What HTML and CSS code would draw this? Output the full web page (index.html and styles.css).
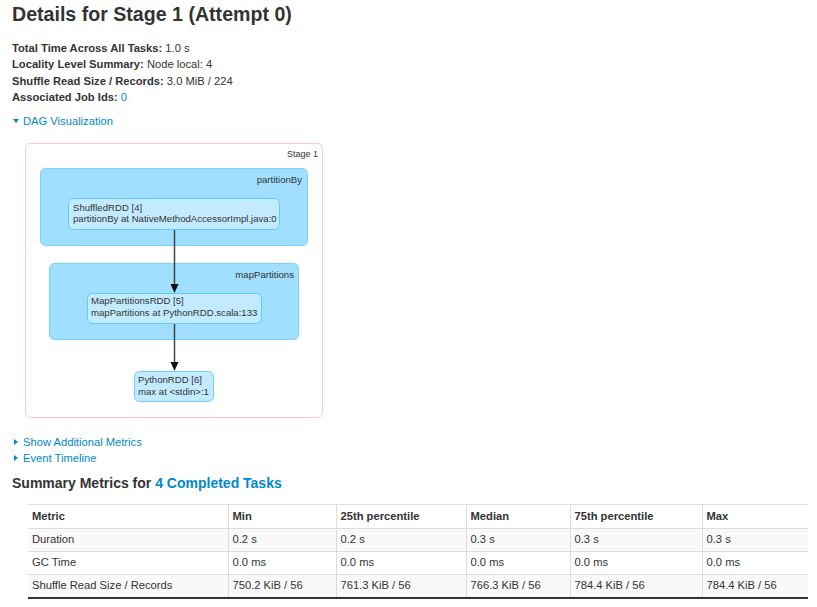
FILE: index.html
```html
<!DOCTYPE html>
<html lang="en">
<head>
  <meta charset="UTF-8" />
  <title>Details for Stage 1 (Attempt 0)</title>
  <link rel="stylesheet" href="styles.css">
</head>
<body>
  <div class="container">
    <h3 class="title">Details for Stage 1 (Attempt 0)</h3>

    <ul class="summary">
      <li><strong>Total Time Across All Tasks:</strong> 1.0 s</li>
      <li><strong>Locality Level Summary:</strong> Node local: 4</li>
      <li><strong>Shuffle Read Size / Records:</strong> 3.0 MiB / 224</li>
      <li><strong>Associated Job Ids:</strong> <a href="#">0</a></li>
    </ul>

    <a href="#" class="toggle"><span class="arrow-open"></span>DAG Visualization</a>

    <svg class="dag" width="300" height="278" viewBox="0 0 300 278">
      <rect class="stage" x="1.5" y="1.5" width="297" height="274" rx="5" />
      <text class="label stage-label" x="294" y="15" text-anchor="end">Stage 1</text>

      <rect class="cluster" x="16.5" y="26.5" width="267" height="77" rx="5" />
      <text class="label" x="278" y="41" text-anchor="end">partitionBy</text>
      <rect class="node" x="44.5" y="56.5" width="211" height="31" rx="5" />
      <text class="label" x="49" y="69">ShuffledRDD [4]</text>
      <text class="label" x="49" y="80">partitionBy at NativeMethodAccessorImpl.java:0</text>

      <rect class="cluster" x="25.5" y="121.5" width="249" height="76" rx="5" />
      <text class="label" x="270" y="136" text-anchor="end">mapPartitions</text>
      <rect class="node" x="63.5" y="151.5" width="174" height="30" rx="5" />
      <text class="label" x="67" y="162">MapPartitionsRDD [5]</text>
      <text class="label" x="67" y="174">mapPartitions at PythonRDD.scala:133</text>

      <rect class="node" x="110.5" y="229.5" width="79" height="30" rx="5" />
      <text class="label" x="114" y="241">PythonRDD [6]</text>
      <text class="label" x="114" y="253">max at &lt;stdin&gt;:1</text>

      <line class="edge" x1="150.5" y1="88" x2="150.5" y2="143" />
      <polygon class="head" points="146.5,142 154.5,142 150.5,151" />
      <line class="edge" x1="150.5" y1="182" x2="150.5" y2="221" />
      <polygon class="head" points="146.5,220 154.5,220 150.5,229" />
    </svg>

    <div class="toggles">
      <a href="#" class="toggle"><span class="arrow-closed"></span>Show Additional Metrics</a>
      <a href="#" class="toggle"><span class="arrow-closed"></span>Event Timeline</a>
    </div>

    <h4 class="section">Summary Metrics for <a href="#">4 Completed Tasks</a></h4>

    <table class="metrics">
      <thead>
        <tr>
          <th class="c-metric">Metric</th>
          <th class="c-min">Min</th>
          <th class="c-p25">25th percentile</th>
          <th class="c-med">Median</th>
          <th class="c-p75">75th percentile</th>
          <th class="c-max">Max</th>
        </tr>
      </thead>
      <tbody>
        <tr>
          <td>Duration</td>
          <td>0.2 s</td>
          <td>0.2 s</td>
          <td>0.3 s</td>
          <td>0.3 s</td>
          <td>0.3 s</td>
        </tr>
        <tr>
          <td>GC Time</td>
          <td>0.0 ms</td>
          <td>0.0 ms</td>
          <td>0.0 ms</td>
          <td>0.0 ms</td>
          <td>0.0 ms</td>
        </tr>
        <tr>
          <td>Shuffle Read Size / Records</td>
          <td>750.2 KiB / 56</td>
          <td>761.3 KiB / 56</td>
          <td>766.3 KiB / 56</td>
          <td>784.4 KiB / 56</td>
          <td>784.4 KiB / 56</td>
        </tr>
      </tbody>
    </table>
  </div>
</body>
</html>
```

FILE: styles.css
```css
:root {
  --link: #0088cc;
  --text: #333333;
  --border: #dddddd;
}

* {
  box-sizing: border-box;
  margin: 0;
  padding: 0;
}

body {
  font-family: 'Liberation Sans', Arial, sans-serif;
  font-size: 11.2px;
  line-height: 16px;
  color: var(--text);
  background: #ffffff;
}

a {
  color: var(--link);
  text-decoration: none;
}

.container {
  padding: 2px 9px 0 12px;
}

.title {
  font-size: 19.6px;
  font-weight: bold;
  line-height: 24px;
  margin-bottom: 14px;
}

.summary {
  list-style: none;
  line-height: 16.3px;
  margin-bottom: 8px;
}

.summary li {
  height: 16.3px;
}

.summary strong {
  font-weight: bold;
}

.toggle {
  display: flex;
  align-items: center;
  line-height: 16px;
}

.arrow-open {
  display: inline-block;
  width: 0;
  height: 0;
  border-left: 3.5px solid transparent;
  border-right: 3.5px solid transparent;
  border-top: 4px solid var(--link);
  margin: 0 4px 0 1px;
}

.arrow-closed {
  display: inline-block;
  width: 0;
  height: 0;
  border-top: 3.5px solid transparent;
  border-bottom: 3.5px solid transparent;
  border-left: 4px solid var(--link);
  margin: 0 5px 0 2px;
}

.dag {
  display: block;
  margin: 13px 0 0 12px;
}

.dag text {
  font-family: 'Liberation Sans', Arial, sans-serif;
  font-size: 9.6px;
  fill: #333333;
}

.dag .stage-label {
  font-size: 9px;
}

.dag .stage {
  fill: #ffffff;
  stroke: #ffc4d0;
  stroke-width: 1;
}

.dag .cluster {
  fill: #a0dfff;
  stroke: #3ec0ff;
  stroke-width: 1;
  stroke-opacity: 0.6;
}

.dag .node {
  fill: #c3ebff;
  stroke: #3ec0ff;
  stroke-width: 1;
  stroke-opacity: 0.7;
}

.dag .edge {
  stroke: #444444;
  stroke-width: 1.5;
}

.dag .head {
  fill: #111111;
}

.toggles {
  margin-top: 14px;
}

.section {
  font-size: 14px;
  font-weight: bold;
  line-height: 18px;
  margin: 8px 0 12px;
}

.metrics {
  border-collapse: collapse;
  margin-left: 16px;
  width: 780px;
  border-top: 1px solid var(--border);
  border-bottom: 2px solid #333333;
}

.metrics th,
.metrics td {
  text-align: left;
  padding: 3px 4px 4px;
  line-height: 15px;
  border: 1px solid var(--border);
  border-top: none;
  white-space: nowrap;
}

.metrics tr > :first-child {
  border-left: none;
}

.metrics tr > :last-child {
  border-right: none;
}

.metrics tbody tr:last-child td {
  border-bottom: none;
}

.metrics th {
  font-weight: bold;
  padding-top: 4px;
}

.metrics tbody tr:nth-child(odd) {
  background: #f9f9f9;
}

.c-metric { width: 200px; }
.c-min { width: 108px; }
.c-p25 { width: 130px; }
.c-med { width: 104px; }
.c-p75 { width: 132px; }
.c-max { width: 106px; }
```
